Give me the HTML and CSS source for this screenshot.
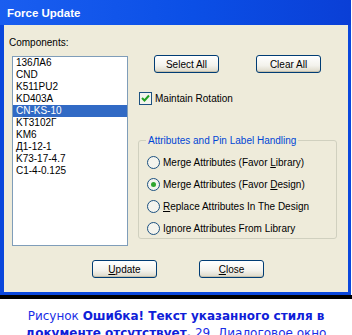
FILE: index.html
```html
<!DOCTYPE html>
<html lang="ru">
<head>
  <meta charset="UTF-8" />
  <title>Force Update</title>
  <link rel="stylesheet" href="styles.css">
</head>
<body>

  <div class="window">
    <div class="titlebar">Force Update</div>

    <div class="content">
      <div class="main">
        <div class="left-col">
          <div class="label">Components:</div>
          <ul class="list">
            <li>136ЛА6</li>
            <li>CND</li>
            <li>K511PU2</li>
            <li>KD403A</li>
            <li class="selected">CN-KS-10</li>
            <li>KT3102Г</li>
            <li>KM6</li>
            <li>Д1-12-1</li>
            <li>K73-17-4.7</li>
            <li>C1-4-0.125</li>
          </ul>
        </div>

        <div class="right-col">
          <div class="btn-row">
            <button class="xp-btn">Select All</button>
            <button class="xp-btn">Clear All</button>
          </div>

          <label class="check-row">
            <span class="checkbox">
              <svg width="11" height="11" viewBox="0 0 11 11">
                <path d="M2 5 L4.5 7.5 L9 2.5" fill="none" stroke="#21a121" stroke-width="2"/>
              </svg>
            </span>
            <span>Maintain Rotation</span>
          </label>

          <div class="group">
            <span class="group-title">Attributes and Pin Label Handling</span>
            <label class="radio-row"><span class="radio"></span><span>Merge Attributes (Favor <u>L</u>ibrary)</span></label>
            <label class="radio-row"><span class="radio on"></span><span>Merge Attributes (Favor <u>D</u>esign)</span></label>
            <label class="radio-row"><span class="radio"></span><span><u>R</u>eplace Attributes In The Design</span></label>
            <label class="radio-row"><span class="radio"></span><span>Ignore Attributes From Library</span></label>
          </div>
        </div>
      </div>

      <div class="footer">
        <button class="xp-btn"><u>U</u>pdate</button>
        <button class="xp-btn"><u>C</u>lose</button>
      </div>
    </div>
  </div>
  <div class="black-line"></div>

  <p class="caption">Рисунок <b>Ошибка! Текст указанного стиля в документе отсутствует.</b> 29. Диалоговое окно</p>

</body>
</html>
```

FILE: styles.css
```css
body {
  margin: 0;
  width: 352px;
  background: #ffffff;
  font-family: "Liberation Sans", Arial, sans-serif;
  font-size: 10px;
  color: #000;
  overflow: hidden;
}

.window {
  width: 351px;
  box-sizing: border-box;
  border-left: 4px solid #0a47dc;
  border-right: 3px solid #0a47dc;
  border-bottom: 3px solid #0a47dc;
  background: #eeebda;
}

.titlebar {
  height: 25px;
  margin-left: -4px;
  margin-right: -3px;
  padding-left: 7px;
  line-height: 26px;
  font-size: 11.5px;
  font-weight: bold;
  color: #ffffff;
  background: linear-gradient(to right, #1a5ef0 0%, #0b4fe6 55%, #0a3fd6 100%);
}

.content {
  height: 267px;
  display: flex;
  flex-direction: column;
}

.main {
  display: flex;
}

.left-col {
  width: 134px;
  padding-left: 5px;
  box-sizing: border-box;
}

.label {
  margin-top: 11px;
  height: 13px;
  line-height: 13px;
}

.list {
  list-style: none;
  margin: 7px 0 0 3px;
  padding: 0;
  width: 116px;
  height: 190px;
  box-sizing: border-box;
  border: 1px solid #7f9db9;
  background: #ffffff;
}

.list li {
  height: 12px;
  line-height: 12px;
  padding-left: 3px;
  white-space: nowrap;
}

.list li.selected {
  background: #316ac5;
  color: #ffffff;
}

.right-col {
  display: flex;
  flex-direction: column;
}

.btn-row {
  display: flex;
  gap: 37px;
  margin-top: 30px;
  padding-left: 16px;
}

.xp-btn {
  width: 65px;
  height: 18px;
  padding: 0;
  font-family: "Liberation Sans", Arial, sans-serif;
  font-size: 10px;
  color: #000;
  border: 1px solid #003c74;
  border-radius: 3px;
  background: linear-gradient(to bottom, #ffffff 0%, #f3f2ec 60%, #dcd8c8 100%);
  box-shadow: inset 0 -1px 0 #c5c0ac;
}

.check-row {
  display: flex;
  align-items: center;
  gap: 3px;
  margin-top: 19px;
  padding-left: 1px;
  height: 13px;
}

.checkbox {
  width: 13px;
  height: 13px;
  box-sizing: border-box;
  border: 1px solid #1c5180;
  background: #f4f4ee;
  display: flex;
  align-items: center;
  justify-content: center;
}

.group {
  position: relative;
  margin-top: 35px;
  width: 199px;
  height: 99px;
  box-sizing: border-box;
  border: 1px solid #d0d0bf;
  border-radius: 3px;
  padding: 15px 0 0 8px;
  display: flex;
  flex-direction: column;
  gap: 9px;
}

.group-title {
  position: absolute;
  top: -7px;
  left: 7px;
  padding: 0 2px;
  line-height: 13px;
  color: #0046d5;
  background: #eeebda;
}

.radio-row {
  display: flex;
  align-items: center;
  gap: 3px;
  height: 13px;
  white-space: nowrap;
}

.radio {
  width: 13px;
  height: 13px;
  box-sizing: border-box;
  border: 1px solid #1c5180;
  border-radius: 50%;
  background: #f4f4ee;
  display: flex;
  align-items: center;
  justify-content: center;
}

.radio.on::after {
  content: "";
  width: 5px;
  height: 5px;
  border-radius: 50%;
  background: #2fa52f;
}

.footer {
  display: flex;
  gap: 42px;
  margin-top: 14px;
  padding-left: 88px;
}

.black-line {
  width: 352px;
  height: 4px;
  background: #000;
}

.caption {
  margin: 9px 0 0 0;
  padding: 0 14px;
  text-align: center;
  font-family: "DejaVu Sans", sans-serif;
  font-size: 12px;
  line-height: 17px;
  color: #1a2ee6;
}

.caption b {
  color: #0f20d8;
}
```
